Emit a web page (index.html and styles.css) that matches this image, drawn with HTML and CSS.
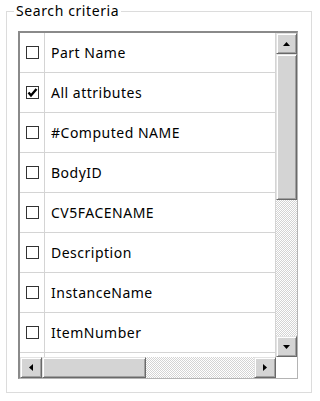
FILE: index.html
```html
<!DOCTYPE html>
<html>
<head>
<meta charset="utf-8">
<link rel="stylesheet" href="styles.css">
</head>
<body>
<fieldset class="group">
  <legend class="group-title">Search criteria</legend>
  <div class="grid">
    <div class="grid-main">
      <div class="rows">
        <div class="row"><div class="cell-check"><span class="cb"></span></div><div class="cell-name">Part Name</div></div>
        <div class="row"><div class="cell-check"><span class="cb"><svg width="11" height="11" viewBox="0 0 11 11"><polyline points="1.5,5.5 4,8.5 9.5,2" fill="none" stroke="#000" stroke-width="2.4"/></svg></span></div><div class="cell-name">All attributes</div></div>
        <div class="row"><div class="cell-check"><span class="cb"></span></div><div class="cell-name">#Computed NAME</div></div>
        <div class="row"><div class="cell-check"><span class="cb"></span></div><div class="cell-name">BodyID</div></div>
        <div class="row"><div class="cell-check"><span class="cb"></span></div><div class="cell-name">CV5FACENAME</div></div>
        <div class="row"><div class="cell-check"><span class="cb"></span></div><div class="cell-name">Description</div></div>
        <div class="row"><div class="cell-check"><span class="cb"></span></div><div class="cell-name">InstanceName</div></div>
        <div class="row"><div class="cell-check"><span class="cb"></span></div><div class="cell-name">ItemNumber</div></div>
        <div class="row"><div class="cell-check"></div><div class="cell-name"></div></div>
      </div>
      <div class="vscroll">
        <div class="sbtn vbtn"><svg width="7" height="4" viewBox="0 0 7 4"><polygon points="0,4 7,4 3.5,0" fill="#000"/></svg></div>
        <div class="sbtn vthumb"></div>
        <div class="track vtrack"></div>
        <div class="sbtn vbtn"><svg width="7" height="4" viewBox="0 0 7 4"><polygon points="0,0 7,0 3.5,4" fill="#000"/></svg></div>
      </div>
    </div>
    <div class="grid-bottom">
      <div class="hscroll">
        <div class="sbtn hbtn"><svg width="4" height="7" viewBox="0 0 4 7"><polygon points="4,0 4,7 0,3.5" fill="#000"/></svg></div>
        <div class="sbtn hthumb"></div>
        <div class="track htrack"></div>
        <div class="sbtn hbtn"><svg width="4" height="7" viewBox="0 0 4 7"><polygon points="0,0 0,7 4,3.5" fill="#000"/></svg></div>
      </div>
      <div class="corner"></div>
    </div>
  </div>
</fieldset>
</body>
</html>
```
FILE: styles.css
```css
* { box-sizing: border-box; }
body {
  margin: 0;
  background: #fff;
  font-family: "Noto Sans", "Open Sans", sans-serif;
  font-size: 14px;
  letter-spacing: 0.5px;
  color: #000;
}
.group {
  margin: 3px 0 0 6px;
  width: 306px;
  border: 1px solid #dcdcdc;
  padding: 12px 13px 13px 11px;
  min-width: 0;
}
.group-title {
  padding: 0 2px;
  margin-left: -4px;
  line-height: 16px;
  font-size: 14px;
  letter-spacing: 0.6px;
}
.grid {
  width: 280px;
  height: 348px;
  border-style: solid;
  border-width: 2px 1px 1px 2px;
  border-color: #8a8a8a #b4b4b4 #b4b4b4 #8a8a8a;
  display: flex;
  flex-direction: column;
  background: #fff;
}
.grid-main {
  display: flex;
  height: 324px;
}
.rows {
  width: 256px;
  overflow: hidden;
}
.row {
  display: flex;
  height: 40px;
  border-bottom: 1px solid #d4d4d4;
}
.cell-check {
  width: 25px;
  border-right: 1px solid #d4d4d4;
  display: flex;
  align-items: center;
  justify-content: center;
}
.cell-name {
  flex: 1;
  border-right: 1px solid #d4d4d4;
  padding-left: 6px;
  display: flex;
  align-items: center;
  white-space: nowrap;
}
.cb {
  width: 13px;
  height: 13px;
  border: 1px solid #333;
  background: #fff;
  display: flex;
}
.vscroll {
  width: 21px;
  display: flex;
  flex-direction: column;
}
.sbtn {
  background: #d4d4d4;
  border: 1px solid;
  border-color: #e3e3e3 #696969 #696969 #e3e3e3;
  box-shadow: inset 1px 1px #fff, inset -1px -1px #a0a0a0;
  display: flex;
  align-items: center;
  justify-content: center;
}
.vbtn { height: 21px; }
.vthumb { height: 146px; }
.vtrack { height: 136px; }
.track {
  background: repeating-conic-gradient(#d4d4d4 0 25%, #fff 0 50%) 0 0 / 2px 2px;
}
.grid-bottom {
  display: flex;
  height: 21px;
}
.hscroll {
  width: 256px;
  display: flex;
}
.hbtn { width: 22px; }
.hthumb { width: 104px; }
.htrack { width: 108px; }
.corner {
  width: 21px;
  background: #fff;
}
```
